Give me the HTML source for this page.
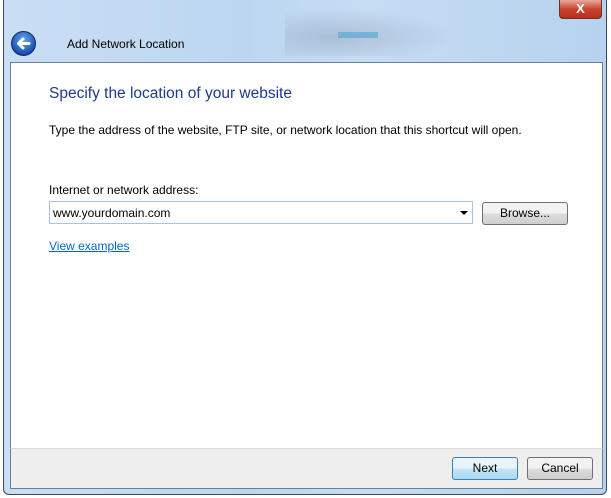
<!DOCTYPE html>
<html><head><style>
body{margin:0;width:611px;height:498px;background:#fff;position:relative;overflow:hidden;font-family:"Liberation Sans",sans-serif;}
.frame{position:absolute;left:3px;top:0;width:604px;height:495px;border:1px solid #3d4a58;border-top:none;border-radius:0 0 6px 6px;background:linear-gradient(90deg,#c9def4 0%,#bcd6f1 40%,#c6dcf3 60%,#b6d2ef 100%);box-sizing:border-box;}
.blur{position:absolute;left:285px;top:8px;width:170px;height:48px;background:radial-gradient(ellipse at 30% 60%,rgba(120,140,160,.35),rgba(255,255,255,0) 70%);}
.content{position:absolute;left:10px;top:62px;width:593px;height:386px;background:#fff;border:1px solid #6e7f92;border-bottom:none;box-sizing:border-box;}
.footer{position:absolute;left:10px;top:448px;width:593px;height:41px;background:#eeeeee;border:1px solid #6e7f92;border-top:1px solid #dcdcdc;box-sizing:border-box;}
.close{position:absolute;left:559px;top:0;width:43px;height:19px;background:linear-gradient(#e9a99c,#c9462f 50%,#b52f1a);border:1px solid #7a2a20;border-top:none;border-radius:0 0 4px 4px;box-sizing:border-box;color:#fff;font-weight:bold;font-size:13px;text-align:center;line-height:17px;}
.back{position:absolute;left:11px;top:31px;width:25px;height:25px;border-radius:50%;background:radial-gradient(circle at 50% 35%,#6aa6ee,#1b4fb3 70%,#0c2f7a);border:1px solid #0d2b66;box-sizing:border-box;}
.t{position:absolute;font-size:12px;color:#000;white-space:nowrap;}
.btn{position:absolute;height:23px;border:1px solid #707070;border-radius:3px;background:linear-gradient(#f2f2f2 50%,#dddddd 50%,#cfcfcf);box-sizing:border-box;font-size:12px;text-align:center;line-height:21px;}
</style></head><body>
<div class="frame"></div>
<div class="blur"></div>
<div style="position:absolute;left:338px;top:32px;width:40px;height:6px;background:#5ba9d8;opacity:.7"></div>
<div class="close">X</div>
<div class="back"><svg width="23" height="23" viewBox="0 0 23 23"><path d="M17 11.5H7M11 7l-4.5 4.5L11 16" stroke="#fff" stroke-width="3" fill="none" stroke-linecap="round" stroke-linejoin="round"/></svg></div>
<div class="t" style="left:67px;top:37px;">Add Network Location</div>
<div class="content"></div>
<div class="footer"></div>
<div class="t" style="left:49px;top:85px;font-size:15.5px;color:#1e3a8a;">Specify the location of your website</div>
<div class="t" style="left:49px;top:123px;">Type the address of the website, FTP site, or network location that this shortcut will open.</div>
<div class="t" style="left:49px;top:183px;">Internet or network address:</div>
<div style="position:absolute;left:49px;top:201px;width:424px;height:23px;border:1px solid #a9c4e0;box-sizing:border-box;"></div>
<div class="t" style="left:53px;top:206px;">www.yourdomain.com</div>
<div style="position:absolute;left:460px;top:211px;width:0;height:0;border-left:4px solid transparent;border-right:4px solid transparent;border-top:4px solid #000;"></div>
<div class="btn" style="left:482px;top:202px;width:86px;">Browse...</div>
<div class="t" style="left:49px;top:239px;color:#0066cc;text-decoration:underline;">View examples</div>
<div class="btn" style="left:452px;top:457px;width:66px;border-color:#3c7fb1;background:linear-gradient(#e8f5fc 50%,#c4e5f6 50%,#a9d9f2);">Next</div>
<div class="btn" style="left:527px;top:457px;width:66px;">Cancel</div>
</body></html>
